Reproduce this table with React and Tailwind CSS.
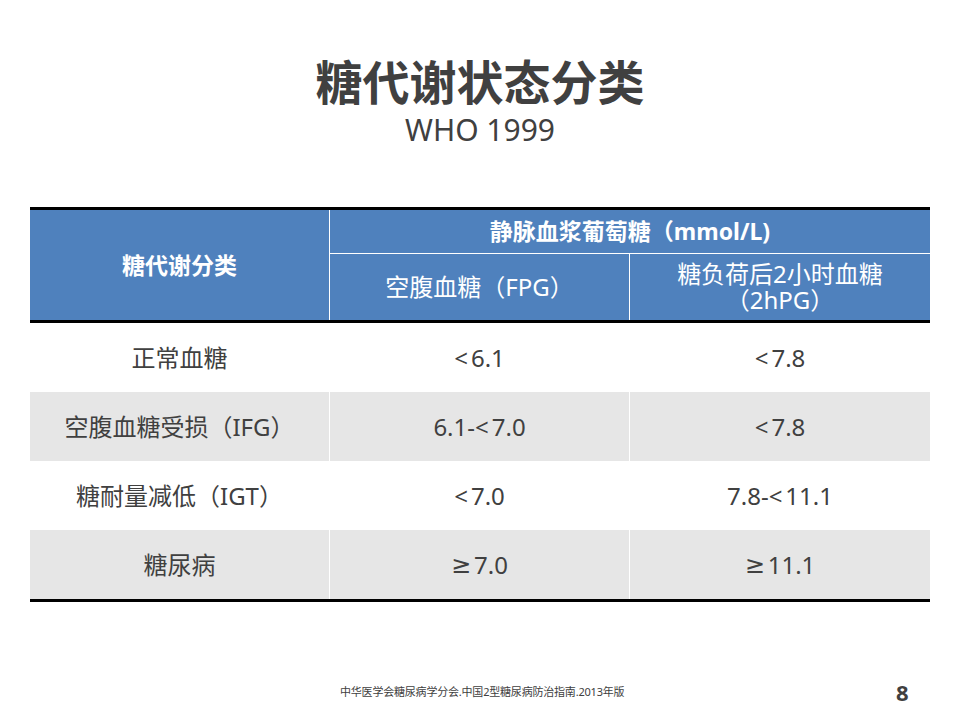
import React from 'react';

const Ge = () => <span style={{ fontFamily: '"DejaVu Sans", sans-serif' }} className="mr-[3px]">≥</span>;
const Lt = () => <span className="mr-[3px]">&lt;</span>;

const rows = [
    { name: '正常血糖', fpg: <><Lt />6.1</>, pg2h: <><Lt />7.8</>, shade: false },
    { name: '空腹血糖受损（IFG）', fpg: <>6.1-<Lt />7.0</>, pg2h: <><Lt />7.8</>, shade: true },
    { name: '糖耐量减低（IGT）', fpg: <><Lt />7.0</>, pg2h: <>7.8-<Lt />11.1</>, shade: false },
    { name: '糖尿病', fpg: <><Ge />7.0</>, pg2h: <><Ge />11.1</>, shade: true },
];

const App = () => {
    return (
        <div
            className="w-[960px] h-[720px] bg-white relative overflow-hidden text-[#404040]"
            style={{ fontFamily: '"Noto Sans", "Noto Sans CJK SC", sans-serif' }}
        >
            <div className="pt-[52px] text-center">
                <h1 className="text-[47px] font-bold leading-[60px]">糖代谢状态分类</h1>
                <p className="text-[30px] leading-[36px]">WHO 1999</p>
            </div>

            <div className="ml-[30px] mt-[59px] w-[900px] border-t-[3px] border-b-[3px] border-black">
                {/* header */}
                <div className="grid grid-cols-[300px_300px_300px] grid-rows-[44px_66px] bg-[#4f81bd] text-white border-b-[3px] border-black">
                    <div className="row-span-2 flex items-center justify-center border-r border-white text-[23px] font-bold">
                        糖代谢分类
                    </div>
                    <div className="col-span-2 flex items-center justify-center border-b border-white text-[23px] font-bold">
                        静脉血浆葡萄糖（mmol/L)
                    </div>
                    <div className="flex items-center justify-center border-r border-white text-[24px]">
                        空腹血糖（FPG）
                    </div>
                    <div className="flex items-center justify-center text-center text-[24px] leading-[26px]">
                        <p>
                            糖负荷后2小时血糖
                            <br />
                            （2hPG）
                        </p>
                    </div>
                </div>

                {/* body */}
                {rows.map((r) => (
                    <div
                        key={r.name}
                        className={
                            'grid grid-cols-[300px_300px_300px] h-[69px] text-[24px] ' +
                            (r.shade ? 'bg-[#e6e6e6]' : 'bg-white')
                        }
                    >
                        <div className="flex items-center justify-center border-r border-white">{r.name}</div>
                        <div className="flex items-center justify-center border-r border-white">{r.fpg}</div>
                        <div className="flex items-center justify-center">{r.pg2h}</div>
                    </div>
                ))}
            </div>

            <div className="absolute left-[340px] top-[684px] text-[11px] text-[#404040] tracking-[-0.2px]">
                中华医学会糖尿病学分会.中国2型糖尿病防治指南.2013年版
            </div>
            <div className="absolute left-[896px] top-[676px] text-[22px] font-bold text-[#404040]">8</div>
        </div>
    );
};

export default App;
